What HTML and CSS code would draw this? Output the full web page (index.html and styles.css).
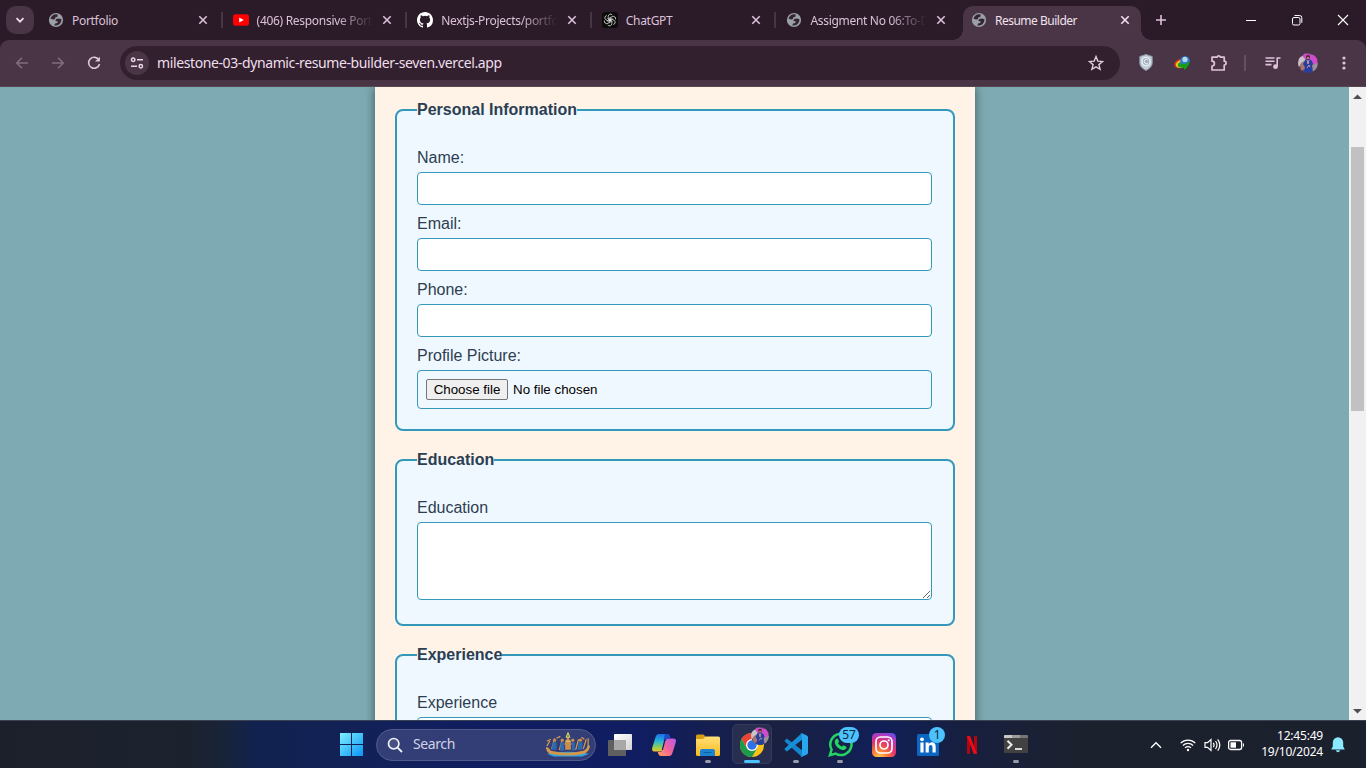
FILE: index.html
```html
<!DOCTYPE html>
<html lang="en">
<head>
<meta charset="utf-8">
<title>Resume Builder</title>
<link rel="stylesheet" href="styles.css">
</head>
<body>
<svg width="0" height="0" class="defs">
  <defs>
    <linearGradient id="win" x1="0" y1="0" x2="1" y2="1"><stop offset="0" stop-color="#7df0ff"/><stop offset="1" stop-color="#0a94f5"/></linearGradient>
    <linearGradient id="cpA" x1="0" y1="0" x2="0" y2="1"><stop offset="0" stop-color="#1b6fe8"/><stop offset=".4" stop-color="#23b4dd"/><stop offset=".75" stop-color="#8fce55"/><stop offset="1" stop-color="#f5c526"/></linearGradient>
    <linearGradient id="cpB" x1="1" y1="0" x2="0" y2="1"><stop offset="0" stop-color="#b55cf0"/><stop offset=".5" stop-color="#f0609c"/><stop offset="1" stop-color="#ffa45a"/></linearGradient>
    <linearGradient id="fold" x1="0" y1="0" x2="0" y2="1"><stop offset="0" stop-color="#ffdf76"/><stop offset="1" stop-color="#fabb20"/></linearGradient>
    <linearGradient id="tv" x1="0" y1="0" x2="1" y2="1"><stop offset="0" stop-color="#ffffff"/><stop offset="1" stop-color="#d4d4d4"/></linearGradient>
    <radialGradient id="ig" cx=".3" cy="1.05" r="1.15"><stop offset="0" stop-color="#ffd24f"/><stop offset=".3" stop-color="#fb7a35"/><stop offset=".6" stop-color="#e3316c"/><stop offset=".85" stop-color="#b13bc0"/><stop offset="1" stop-color="#6a4be0"/></radialGradient>
  </defs>
  <symbol id="globe" viewBox="0 0 16 16"><circle cx="8" cy="8" r="7.1" fill="#9aa0a6"/><path d="M2.6 6.8 5.2 7.6Q7.6 7.7 7.2 5.6L9.4 4.8 9.8 2.6 7.2 2.3Q3.6 3 2.6 6.800zM8 7.200Q10.400 5.800 13.500 7.200 13.600 10.200 11.400 12.300 9 14 6.300 13.400L7 11.400 9.300 11.100 9.700 9.400 7.300 8.800z" fill="#352433"/></symbol>
  <symbol id="close" viewBox="0 0 10 10"><path d="M1.3 1.3 8.7 8.7M8.7 1.3 1.3 8.7" stroke="currentColor" stroke-width="1.6" fill="none"/></symbol>
  <symbol id="avatar" viewBox="0 0 20 20"><clipPath id="avc"><circle cx="10" cy="10" r="10"/></clipPath><g clip-path="url(#avc)"><rect width="20" height="20" fill="#59485e"/><path d="M0 5 7 2 8 9 0 14Z" fill="#c9c3c9"/><path d="M6 0 20 3 19 13 12 11 5 4Z" fill="#cf4bcc"/><path d="M2 11 6 8 7 16 3 18Z" fill="#a97573"/><path d="M7 7 10 5 14 8 16 14 13 20 6 20 7 14 5 11Z" fill="#263da2"/><path d="M14 12 20 10 19 18 15 19Z" fill="#9c9197"/><circle cx="10" cy="4" r="2" fill="#4b2530"/><circle cx="10" cy="5" r="1.2" fill="#b9775b"/><path d="m9 7 1 4 1-4M9 15l2-3 1 2" fill="none" stroke="#e4a382" stroke-width=".9"/></g></symbol>
</svg>

<header class="tabstrip">
  <button class="tab-search"><svg width="12" height="12" viewBox="0 0 12 12"><path d="m2.5 4.2 3.5 3.5 3.5-3.5" fill="none" stroke="#e9dbe7" stroke-width="1.8"/></svg></button>
  <nav class="tabs">
    <div class="tab"><svg class="fav"><use href="#globe"/></svg><span class="tab-title">Portfolio</span><svg class="x"><use href="#close"/></svg></div>
    <div class="tab"><svg class="fav" viewBox="0 0 16 16"><rect y="2.3" width="16" height="11.4" rx="2.6" fill="#f00"/><path d="M6.2 5.4v5.2L10.8 8z" fill="#fff"/></svg><span class="tab-title fade">(406) Responsive Port</span><svg class="x"><use href="#close"/></svg></div>
    <div class="tab"><svg class="fav" viewBox="0 0 16 16"><path fill="#fff" d="M8 0C3.58 0 0 3.58 0 8c0 3.54 2.29 6.53 5.47 7.59.4.07.55-.17.55-.38 0-.19-.01-.82-.01-1.49-2.01.37-2.53-.49-2.69-.94-.09-.23-.48-.94-.82-1.13-.28-.15-.68-.52-.01-.53.63-.01 1.08.58 1.23.82.72 1.21 1.87.87 2.33.66.07-.52.28-.87.51-1.07-1.78-.2-3.64-.89-3.64-3.95 0-.87.31-1.59.82-2.15-.08-.2-.36-1.02.08-2.12 0 0 .67-.21 2.2.82a7.6 7.6 0 0 1 4 0c1.53-1.04 2.2-.82 2.2-.82.44 1.1.16 1.92.08 2.12.51.56.82 1.27.82 2.15 0 3.07-1.87 3.75-3.65 3.95.29.25.54.73.54 1.48 0 1.07-.01 1.93-.01 2.2 0 .21.15.46.55.38A8.01 8.01 0 0 0 16 8c0-4.42-3.58-8-8-8z"/></svg><span class="tab-title fade">Nextjs-Projects/portfo</span><svg class="x"><use href="#close"/></svg></div>
    <div class="tab"><svg class="fav" viewBox="0 0 16 16"><rect width="16" height="16" rx="3" fill="#0b0d0b"/><g fill="none" stroke="#dedede" stroke-width=".8"><path id="petal" d="M6.2 7V4.300A2.300 2.300 0 0 1 10.200 2.900M6.200 7 8 8.100 10.400 6.700"/><use href="#petal" transform="rotate(60 8 8)"/><use href="#petal" transform="rotate(120 8 8)"/><use href="#petal" transform="rotate(180 8 8)"/><use href="#petal" transform="rotate(240 8 8)"/><use href="#petal" transform="rotate(300 8 8)"/></g></svg><span class="tab-title">ChatGPT</span><svg class="x"><use href="#close"/></svg></div>
    <div class="tab no-sep"><svg class="fav"><use href="#globe"/></svg><span class="tab-title fade">Assigment No 06:To-D</span><svg class="x"><use href="#close"/></svg></div>
    <div class="tab active"><svg class="fav"><use href="#globe"/></svg><span class="tab-title">Resume Builder</span><svg class="x"><use href="#close"/></svg></div>
  </nav>
  <svg class="plus" viewBox="0 0 12 12"><path d="M6 1v10M1 6h10" stroke="#dcc1d8" stroke-width="1.6"/></svg>
  <div class="win-controls">
    <svg width="12" height="12" viewBox="0 0 12 12"><path d="M1 6.5h10" stroke="#fff"/></svg>
    <svg width="12" height="12" viewBox="0 0 12 12"><rect x="1.5" y="3.5" width="7.5" height="7.5" rx="1.5" fill="none" stroke="#fff"/><path d="M3.5 1.5H8.5A2.2 2.2 0 0 1 10.8 3.8V8.8" fill="none" stroke="#fff"/></svg>
    <svg width="12" height="12" viewBox="0 0 12 12"><path d="m1 1 10 10M11 1 1 11" stroke="#fff" stroke-width="1.1"/></svg>
  </div>
</header>

<div class="toolbar">
  <div class="nav-buttons">
    <svg width="16" height="16" viewBox="0 0 16 16"><path d="M14 8H3M8 2.7 2.7 8 8 13.3" fill="none" stroke="#806b7c" stroke-width="1.6"/></svg>
    <svg width="16" height="16" viewBox="0 0 16 16"><path d="M2 8h11M8 2.7 13.3 8 8 13.3" fill="none" stroke="#806b7c" stroke-width="1.6"/></svg>
    <svg width="16" height="16" viewBox="0 0 16 16"><path d="M13 5.2A5.5 5.5 0 1 0 13.5 9" fill="none" stroke="#e0c6dc" stroke-width="1.6"/><path d="M13.9 1.7v4.9H9z" fill="#e0c6dc"/></svg>
  </div>
  <div class="omnibox">
    <span class="site-info"><svg width="14" height="14" viewBox="0 0 14 14" fill="none" stroke="#e6d6e3" stroke-width="1.5"><circle cx="3.2" cy="3.7" r="1.7"/><path d="M7 3.7h6M1 10.3h6"/><circle cx="10.8" cy="10.3" r="1.7"/></svg></span>
    <span class="url">milestone-03-dynamic-resume-builder-seven.vercel.app</span>
    <svg class="star" width="16" height="16" viewBox="0 0 16 16"><path d="m8 1.6 1.8 4.5 4.8.4-3.7 3.1 1.2 4.7L8 11.8l-4.1 2.5 1.2-4.7-3.7-3.1 4.8-.4z" fill="none" stroke="#e0cbdc" stroke-width="1.4"/></svg>
  </div>
  <div class="extensions">
    <svg width="14" height="17" viewBox="0 0 14 17"><path d="M7 .5 13.2 2.5V9C13.2 12.5 10 15 7 16.4 4 15 .8 12.5.8 9V2.5z" fill="#c3ced8" stroke="#8797a6"/><circle cx="7" cy="7.5" r="4" fill="#a3b1be" stroke="#edf6fa" stroke-width="1.2"/><path d="M9 6A2.2 2.2 0 1 0 9 9" fill="none" stroke="#edf6fa"/></svg>
    <svg width="16" height="16" viewBox="0 0 16 16"><ellipse cx="6.500" cy="8.500" rx="6.300" ry="4.600" transform="rotate(-20 6.500 8.500)" fill="#e2381f"/><ellipse cx="7.200" cy="9" rx="5.400" ry="3.800" transform="rotate(-20 7.200 9)" fill="#f3d51d"/><ellipse cx="8" cy="9.500" rx="4.500" ry="3" transform="rotate(-20 8 9.500)" fill="#2a9b33"/><circle cx="11" cy="6" r="4.800" fill="#2f7bc9"/><circle cx="11" cy="4.400" r="2.600" fill="#b1d9f4"/><path d="m4.500 10.500 4-2 2 1 4-2.500 1.200 1-2 3.500-3 3.500-1.200-2.500z" fill="#13a012"/></svg>
    <svg width="18" height="18" viewBox="0 0 18 18"><path d="M2 3.2H7A1.8 1.8 0 0 1 10.5 3.2H14.2V7.2A1.8 1.8 0 0 1 14.2 11V16H2V12A2.4 2.4 0 0 0 2 7.2Z" fill="none" stroke="#dfc2da" stroke-width="1.7" stroke-linejoin="round"/></svg>
    <i class="divider"></i>
    <svg width="16" height="14" viewBox="0 0 16 14"><path d="M.5 2h9M.5 5.3h9M.5 8.6h6M12.2 10.5V2h3.3" fill="none" stroke="#dfc2da" stroke-width="1.6"/><circle cx="10.5" cy="10.7" r="2.4" fill="#dfc2da"/></svg>
    <svg width="20" height="20"><use href="#avatar"/></svg>
    <svg width="4" height="14" viewBox="0 0 4 14" fill="#dfc2da"><circle cx="2" cy="2" r="1.6"/><circle cx="2" cy="7" r="1.6"/><circle cx="2" cy="12" r="1.6"/></svg>
  </div>
</div>

<main class="viewport">
  <div class="page">
    <form class="resume">
      <fieldset>
        <legend>Personal Information</legend>
        <label for="name">Name:</label><input id="name" type="text">
        <label for="email">Email:</label><input id="email" type="email">
        <label for="phone">Phone:</label><input id="phone" type="tel">
        <label>Profile Picture:</label>
        <div class="file"><button type="button">Choose file</button><span>No file chosen</span></div>
      </fieldset>
      <fieldset>
        <legend>Education</legend>
        <label for="edu">Education</label><textarea id="edu"></textarea>
      </fieldset>
      <fieldset>
        <legend>Experience</legend>
        <label for="exp">Experience</label><textarea id="exp"></textarea>
      </fieldset>
    </form>
  </div>
  <div class="scrollbar">
    <svg width="9" height="5" viewBox="0 0 9 5"><path d="M0 5 4.5.4 9 5z" fill="#505050"/></svg>
    <div class="track"><div class="thumb"></div></div>
    <svg width="9" height="5" viewBox="0 0 9 5"><path d="M0 0 4.5 4.6 9 0z" fill="#505050"/></svg>
  </div>
</main>

<footer class="taskbar">
  <div class="apps">
    <div class="app start"><svg width="23" height="23" viewBox="0 0 23 23"><path d="M0 0h11v11H0zM12 0h11v11H12zM0 12h11v11H0zM12 12h11v11H12z" fill="url(#win)"/></svg></div>
    <div class="search">
      <svg width="16" height="16" viewBox="0 0 16 16"><circle cx="6.7" cy="6.7" r="5.2" fill="#ffffff18" stroke="#eef0fa" stroke-width="1.7"/><path d="m10.6 10.6 4.4 4.4" stroke="#eef0fa" stroke-width="1.9"/></svg>
      <span>Search</span>
      <svg class="boat" width="46" height="26" viewBox="0 0 48 26"><path d="M2 22q22-4 44 0l-7 3H9z" fill="#2ba5e3"/><path d="M1 15q3 0 5 4 17 4 34 0 4-2 5-6l2 1q-1 6-6 8-17 4-36 0-4-2-4-7z" fill="#d3974c"/><g stroke="#d9a04c" stroke-width="1.2" fill="none"><path d="M7 17 10 6M15 18l3-11M32 18l3-11M40 17l3-10M45 15V6M2 9l4-2M12 6l4-2M38 5l3 2M20 12h8M2 14l3-5"/></g><g fill="#2e69af"><path d="M8 10h4v8H7zM16 10h4v9h-4zM28 10h3v9h-3zM35 10h4v8h-5z"/></g><g fill="#c88c4c"><circle cx="10" cy="8" r="1.700"/><circle cx="18" cy="8" r="1.700"/><circle cx="29" cy="8" r="1.700"/><circle cx="37" cy="8" r="1.700"/><path d="m21 10 3-6 3 6v8h-6z"/></g><path d="m22 5 2-5 2 5zM21 9h6" stroke="#e9d567" fill="#5b945b"/></svg>
    </div>
    <div class="app"><svg width="24" height="22" viewBox="0 0 24 22"><rect x="6" width="18" height="16" rx=".8" fill="url(#tv)"/><rect y="6" width="18" height="16" rx=".8" fill="#606060"/><path d="M6 6h12v10H6z" fill="#a8a8a8"/></svg></div>
    <div class="app"><svg width="24" height="22" viewBox="0 0 24 22"><path fill-rule="evenodd" d="M7 0h8q2 0 2.7 2.3L18.3 4h-2q-2 0-2.7 2.2L10.800 15q-.8 2.600-3 2.600H3q-3.800 0-2.700-4L3.500 3.300Q4.500 0 7 0z" fill="url(#cpA)"/><path d="M17 22H9q-2 0-2.700-2.300L5.700 18h2q2 0 2.700-2.200L13.200 7q.8-2.600 3-2.600H21q3.800 0 2.700 4l-3.200 10.300Q19.500 22 17 22z" fill="url(#cpB)"/><path d="M13 0h2q2 0 2.700 2.300L18.300 4.400h-2q-2.200 0-3 2.600L11.500 6z" fill="#214bce"/><path d="M12.300 5.500h1.300L10.900 16H9.700z" fill="#121e5e"/></svg></div>
    <div class="app running"><svg width="24" height="22" viewBox="0 0 24 22"><path d="M0 2Q0 .5 1.5.5h6L10 3v4H0z" fill="#d79c12"/><path d="M8 4 10 2.5H22.5Q24 2.5 24 4V20.5Q24 22 22.5 22H1.5Q0 22 0 20.5V5h7z" fill="url(#fold)"/><path d="M4 22v-5q0-2 2-2h11q2 0 2 2v5z" fill="#1b83d1"/><path d="M7.5 18h8v1h-8z" fill="#0960a5"/></svg></div>
    <div class="app focused"><svg width="24" height="24" viewBox="0 0 24 24"><circle cx="12" cy="12" r="12" fill="#fbc116"/><path d="M1.6 6A12 12 0 0 1 22.4 6H12L7 15z" fill="#ea4335"/><path d="M1.6 6A12 12 0 0 0 12 24l5.2-9H6.8z" fill="#1d9a4d"/><circle cx="12" cy="12" r="6" fill="#fff"/><circle cx="12" cy="12" r="4.7" fill="#2f73e7"/></svg><svg class="mini-avatar"><use href="#avatar"/></svg></div>
    <div class="app running"><svg width="24" height="24" viewBox="0 0 24 24"><path d="M1 7.2 2.8 5.6 18 17.2V24L.8 8.6Q0 7.8 1 7.2z" fill="#1485cc"/><path d="M1 16.8l1.8 1.6L18 6.8V0L.8 15.4q-.8.8.2 1.4z" fill="#168fd8"/><path d="m17.5 0 5.3 2.5Q24 3 24 4.2v15.6q0 1.2-1.2 1.7L17.5 24q-1 0-1.3-.8 1.8 1 1.8-1V1.8q0-2-1.8-1z" fill="#29a7ee"/></svg></div>
    <div class="app running"><svg width="25" height="25" viewBox="0 0 25 25"><path d="M2 23.2 3.6 17.5A10.6 10.6 0 1 1 7.6 21.6Z" fill="#142248" stroke="#24d366" stroke-width="2.5"/><path d="M8.2 6.8q1.2-1 2 .6l.8 2q.2.5-1 1.8 1.4 2.5 4 3.5 1.2-1.6 1.8-1.3l2.5 1.3q.8.5-.4 2.2-2.2 2-5.2.5Q8 15.500 6.800 11q-.4-2.800 1.400-4.200z" fill="#24d366"/></svg><span class="badge wide">57</span></div>
    <div class="app"><svg width="24" height="24" viewBox="0 0 24 24"><rect width="24" height="24" rx="4.5" fill="url(#ig)"/><rect x="4" y="4" width="16" height="16" rx="4.5" fill="none" stroke="#fff" stroke-width="1.7"/><circle cx="12" cy="12" r="4" fill="none" stroke="#fff" stroke-width="1.7"/><circle cx="16.7" cy="7.3" r="1.1" fill="#fff"/></svg></div>
    <div class="app"><svg width="22" height="22" viewBox="0 0 22 22"><rect width="22" height="22" rx="1.5" fill="#0a66c2"/><circle cx="5" cy="5.3" r="1.9" fill="#fff"/><path d="M3.4 8.5h3.200v10H3.400zM8.600 8.500h3.100v1.400q1-1.700 3.200-1.700 3.800 0 3.800 4.500v5.800h-3.200v-5.200q0-2.300-1.700-2.300-2 0-2 2.400v5.100H8.600z" fill="#fff"/></svg><span class="badge">1</span></div>
    <div class="app"><svg width="10" height="18" viewBox="0 0 10 18"><path d="M0 0h3v18l-3-.2zM7 0h3v18l-3-.2z" fill="#b20710"/><path d="M0 0h3.200L10 18l-3.300-.3z" fill="#f00a18"/></svg></div>
    <div class="app running"><svg class="term" width="24" height="18" viewBox="0 0 24 18"><rect width="24" height="18" rx="1" fill="#424242"/><path d="M0 1q0-1 1-1h7v3H0z" fill="#c8c8c8"/><path d="M8 0h8v3H8z" fill="#9c9c9c"/><path d="M16 0h7q1 0 1 1v2h-8z" fill="#767676"/><path d="m3.500 5.800 4 4-4 4" fill="none" stroke="#ececec" stroke-width="2"/><path d="M11 14h7" stroke="#fff" stroke-width="1.600"/></svg></div>
  </div>
  <div class="tray">
    <svg width="12" height="8" viewBox="0 0 12 8"><path d="m1 6.800 5-5 5 5" fill="none" stroke="#fff" stroke-width="1.400"/></svg>
    <svg width="16" height="14" viewBox="0 0 16 14" fill="none" stroke="#fff" stroke-width="1.200"><path d="M.7 5.100a10.300 10.300 0 0 1 14.600 0M2.900 7.500a7.200 7.200 0 0 1 10.200 0M5 9.800a4.200 4.200 0 0 1 6 0"/><circle cx="8" cy="12" r="1.200" fill="#fff" stroke="none"/></svg>
    <svg width="17" height="14" viewBox="0 0 17 14" fill="none" stroke="#fff" stroke-width="1.200"><path d="M1 4.700h2.500L7 1.500v11L3.500 9.300H1z"/><path d="M9.300 4.800q1.500 2.200 0 4.400M11.500 3q3 4 0 8M13.700 1.300q4.200 5.700 0 11.400"/></svg>
    <svg width="17" height="12" viewBox="0 0 17 12"><rect x=".6" y="1.500" width="13" height="9" rx="2" fill="none" stroke="#fff" stroke-width="1.300"/><path d="M2.500 3.300h5.500v5.400H2.500z" fill="#fff"/><path d="M15 4.300q1 0 1 1v1.400q0 1-1 1z" fill="#fff"/></svg>
    <div class="clock"><span>12:45:49</span><span>19/10/2024</span></div>
    <svg width="14" height="16" viewBox="0 0 14 16"><path d="M7 .3A5.200 5.200 0 0 1 12.200 5.500V9.500L13.800 12.500H.2L1.800 9.500v-4A5.200 5.200 0 0 1 7 .3zM4.800 13.300h4.400Q8.500 15.300 7 15.300t-2.200-2z" fill="#8be9ff"/></svg>
  </div>
</footer>
</body>
</html>
```
FILE: styles.css
```css
* { box-sizing: border-box; }
html, body { height: 100%; margin: 0; }
body {
  display: flex;
  flex-direction: column;
  overflow: hidden;
  background: #2b1b29;
  font-family: "Noto Sans", "Open Sans", sans-serif;
}
svg { flex: none; display: block; }
.defs { position: absolute; }
button { font: inherit; }

/* Tab strip */
.tabstrip { display: flex; flex: none; height: 40px; color: #dcc1d8; }
.tab-search {
  display: grid; place-items: center;
  width: 28px; height: 28px; margin: 6px 3px 0 6px; padding: 0;
  border: 0; border-radius: 10px; background: #4a3546;
}
.tabs { display: flex; }
.tab {
  display: flex; align-items: center;
  width: 184.6px; height: 40px; padding: 0 14px 0 11px;
  position: relative;
}
.tab:not(.no-sep):not(.active)::after {
  content: ""; position: absolute; right: -1px; top: 12px;
  width: 2px; height: 16px; background: #4a3546;
}
.fav { width: 16px; height: 16px; margin-right: 8px; }
.tab-title {
  flex: 1; white-space: nowrap; padding-top: 1px;
  font-size: 12px; letter-spacing: -0.3px; line-height: 18px;
}
.fade { -webkit-mask-image: linear-gradient(90deg, #000 80px, transparent 116px); mask-image: linear-gradient(90deg, #000 80px, transparent 116px); }
.tab .fade { min-width: 0; }
.x { width: 10px; height: 10px; margin-left: 12px; }
.fade + .x { margin-left: 10px; }
.tab.active {
  width: 178px; height: 34px; margin: 6px 0 0 3px; padding: 0 11px 6px 8px;
  border-radius: 10px 10px 0 0; background: #4a3546; color: #f1e2ee;
}
.tab.active .tab-title { letter-spacing: -0.55px; letter-spacing: -0.5px; }
.tab.active::before, .tab.active::after {
  content: ""; position: absolute; bottom: 0; width: 10px; height: 10px;
}
.tab.active::before { left: -10px; background: radial-gradient(circle at 0 0, transparent 9.5px, #4a3546 10px); }
.tab.active::after { right: -10px; background: radial-gradient(circle at 100% 0, transparent 9.5px, #4a3546 10px); }
.plus { width: 12px; height: 12px; margin: 14px 0 0 14px; }
.win-controls { display: flex; gap: 34px; margin: 14px 17px 0 auto; }

/* Toolbar */
.toolbar {
  display: flex; flex: none; align-items: center;
  height: 47px; padding-bottom: 1px;
  border-radius: 9px 9px 0 0; border-bottom: 1px solid #57454f;
  background: #4a3546;
}
.nav-buttons { display: flex; gap: 20px; margin: 0 18px 0 14px; }
.omnibox {
  display: flex; align-items: center;
  width: 1000px; height: 34px; padding: 0 16px 0 5px;
  border-radius: 17px; background: #33202f; color: #eddfeb;
}
.site-info {
  display: grid; place-items: center;
  width: 24px; height: 24px; margin-right: 8px;
  border-radius: 50%; background: #4a3546;
}
.url { font-size: 14px; letter-spacing: -0.39px; white-space: nowrap; }
.star { margin-left: auto; }
.extensions { display: flex; align-items: center; margin-left: 19px; }
.extensions > :nth-child(2) { margin-left: 21px; }
.extensions > :nth-child(3) { margin-left: 20px; }
.divider { width: 2px; height: 16px; margin: 0 19px 0 16px; background: #664f61; }
.extensions > :nth-child(6) { margin-left: 17px; }
.extensions > :nth-child(7) { margin-left: 24px; }

/* Page */
.viewport { display: flex; flex: none; height: 633px; overflow: hidden; background: #7eabb3; }
.page { flex: 1; overflow: hidden; font-family: "Liberation Sans", Arial, sans-serif; }
.resume {
  width: 600px; height: 900px; margin: 0 0 0 375px; padding: 14px 20px;
  background: #fff3e8; color: #2c3e50; box-shadow: 0 0 10px rgba(0, 0, 0, .5);
}
fieldset {
  min-width: 0; margin: 0 0 20px; padding: 20px;
  border: 2px solid #3498bb; border-radius: 8px; background: #f0f8ff;
}
legend { padding: 0; font-size: 16px; font-weight: bold; line-height: 18px; }
fieldset label { display: block; margin: 10px 0 5px; font-size: 16px; line-height: 18px; }
fieldset input, .file, textarea {
  display: block; width: 515px; height: 33px; padding: 8px;
  border: 1px solid #3498bb; border-radius: 4px; background: #fff;
}
.file {
  display: flex; align-items: center; gap: 5px;
  height: 39px; background: none; color: #000; font-size: 13.333px;
}
.file button {
  width: 82px; height: 21px; padding: 0;
  border: 1px solid #767676; border-radius: 2px; background: #efefef;
  color: #000; line-height: 15px;
}
textarea { height: 78px; margin-bottom: 4px; resize: vertical; }

.scrollbar {
  display: flex; flex-direction: column; align-items: center;
  width: 17px; padding: 7px 0 6px; background: #f1f1f1;
}
.track { flex: 1; width: 13px; padding-top: 48px; }
.thumb { height: 264px; background: #c1c1c1; }

/* Taskbar */
.taskbar {
  display: flex; flex: none; height: 48px;
  border-top: 1px solid #3c4254;
  background: linear-gradient(90deg, #1c202b 0, #1b222e 190px, #182439 225px, #11224f 255px, #122257 350px, #101d60 480px, #101d60 640px, #1a2040 780px, #101f58 880px, #171f40 960px, #1c212e 1080px, #1b202d 100%);
}
.apps { display: flex; align-items: center; margin-left: 329px; }
.app { display: grid; place-items: center; position: relative; width: 44px; height: 47px; }
.app.start { margin-right: 3px; }
.search {
  display: flex; align-items: center;
  width: 220px; height: 32px; margin-right: 2px; padding: 0 4px 0 10px;
  border: 1px solid #505b8b; border-radius: 16px; background: #343e76;
  color: #cfd3e6; font-size: 14px; letter-spacing: -.4px;
}
.search span { margin: -2px 0 0 10px; }
.boat { margin-left: auto; }
.running::after, .focused::after {
  content: ""; position: absolute; bottom: 5px; left: 19px;
  width: 6px; height: 3px; border-radius: 2px; background: #989cab;
}
.focused::before {
  content: ""; position: absolute; z-index: -1; inset: 3px 2px 4px;
  border: 1px solid #343a5b; border-radius: 5px; background: #282e50;
}
.focused { z-index: 0; }
.focused::after { left: 14px; width: 16px; background: #4cc2ff; }
.mini-avatar { position: absolute; top: 6px; left: 21px; width: 18px; height: 18px; }
.running .term { margin-top: -1px; }
.badge {
  position: absolute; top: 6px; left: 23px;
  width: 16px; height: 16px; border-radius: 8px; background: #4cc2ff;
  color: #10243a; font-size: 12px; line-height: 16px; text-align: center; letter-spacing: -.2px;
}
.badge.wide { left: 21px; width: 20px; }
.tray { display: flex; align-items: center; margin: 0 21px 0 auto; }
.tray > :nth-child(2) { margin-left: 18px; }
.tray > :nth-child(3) { margin-left: 8px; }
.tray > :nth-child(4) { margin-left: 7px; }
.clock {
  display: flex; flex-direction: column; align-items: flex-end;
  width: 78px; margin: -2px 8px 0 0;
  color: #fff; font-size: 12px; line-height: 16px; white-space: nowrap;
}
.clock span { letter-spacing: -.2px; }
```
